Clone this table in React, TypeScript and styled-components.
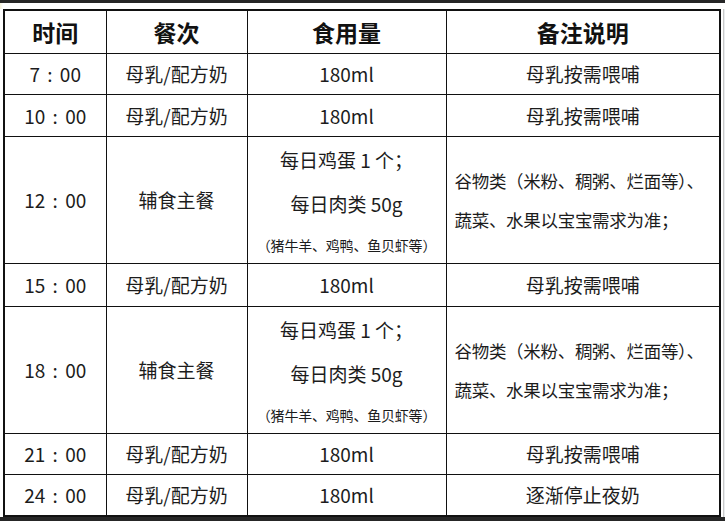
import styled, { createGlobalStyle } from "styled-components";

const GlobalStyle = createGlobalStyle`
  html, body {
    margin: 0;
    padding: 0;
    background: #ffffff;
  }
  body {
    font-family: "Noto Sans CJK SC", "Noto Sans", sans-serif;
    color: #1c1c1c;
  }
`;

const Page = styled.div`
  width: 725px;
  height: 521px;
  display: flex;
  flex-direction: column;
  overflow: hidden;
  background: #ffffff;
`;

const DarkBar = styled.div<{ $h: number }>`
  height: ${(p) => p.$h}px;
  flex-shrink: 0;
  background: #262626;
`;

const Middle = styled.div`
  flex: 1;
  display: flex;
  padding-top: 6px;
  background: linear-gradient(to right, #f6f3dc 0, #ffffff 3px);
`;

const TableWrap = styled.div`
  padding-left: 3px;
  width: 717px;
  background: #ffffff;
`;

const SideStrip = styled.div`
  flex: 1;
  margin-left: 3px;
  background: #e9ecee;
  border-left: 1px solid #c9c9c9;
`;

const Table = styled.table`
  border-collapse: collapse;
  table-layout: fixed;
  width: 716px;
  border: 2px solid #111;
`;

const Col = styled.col<{ $w: number }>`
  width: ${(p) => p.$w}px;
`;

const Row = styled.tr<{ $h: number }>`
  height: ${(p) => p.$h}px;
`;

const Th = styled.th`
  border: 1.5px solid #111;
  font-size: 23px;
  font-weight: 700;
  color: #111;
  text-align: center;
  vertical-align: middle;
  padding: 0;
`;

const Td = styled.td<{ $align?: string }>`
  border: 1.5px solid #111;
  font-size: 19px;
  text-align: ${(p) => p.$align || "center"};
  vertical-align: middle;
  padding: 0;
  white-space: nowrap;
`;

const TimeTd = styled(Td)`
  word-spacing: 3px;
`;

const Food = styled.div`
  display: flex;
  flex-direction: column;
  align-items: center;
  padding-top: 2px;
`;

const FoodLine = styled.div<{ $h: number }>`
  height: ${(p) => p.$h}px;
  line-height: ${(p) => p.$h}px;
`;

const SmallLine = styled.div`
  height: 36px;
  line-height: 36px;
  font-size: 14px;
  letter-spacing: -0.2px;
`;

const Note = styled.div`
  padding-left: 8px;
  font-size: 17.5px;
  line-height: 39px;
  letter-spacing: -0.3px;
`;

type Simple = { time: string; meal: string; amount: string; note: string };
type Row = Simple | { time: string; big: true };

const rows: Row[] = [
  { time: "7 : 00", meal: "母乳/配方奶", amount: "180ml", note: "母乳按需喂哺" },
  { time: "10 : 00", meal: "母乳/配方奶", amount: "180ml", note: "母乳按需喂哺" },
  { time: "12 : 00", big: true },
  { time: "15 : 00", meal: "母乳/配方奶", amount: "180ml", note: "母乳按需喂哺" },
  { time: "18 : 00", big: true },
  { time: "21 : 00", meal: "母乳/配方奶", amount: "180ml", note: "母乳按需喂哺" },
  { time: "24 : 00", meal: "母乳/配方奶", amount: "180ml", note: "逐渐停止夜奶" },
];

const heights = [41, 42, 125, 43, 125, 41, 42];

export default function App() {
  return (
    <Page>
      <GlobalStyle />
      <DarkBar $h={3} />
      <Middle>
        <TableWrap>
          <Table>
            <colgroup>
              <Col $w={102} />
              <Col $w={141} />
              <Col $w={199} />
              <Col $w={274} />
            </colgroup>
            <tbody>
              <Row $h={43}>
                <Th>时间</Th>
                <Th>餐次</Th>
                <Th>食用量</Th>
                <Th>备注说明</Th>
              </Row>
              {rows.map((r, i) =>
                "big" in r ? (
                  <Row key={i} $h={heights[i]}>
                    <TimeTd>{r.time}</TimeTd>
                    <Td>辅食主餐</Td>
                    <Td>
                      <Food>
                        <FoodLine $h={42}>每日鸡蛋 1 个；</FoodLine>
                        <FoodLine $h={46}>每日肉类 50g</FoodLine>
                        <SmallLine>（猪牛羊、鸡鸭、鱼贝虾等）</SmallLine>
                      </Food>
                    </Td>
                    <Td $align="left">
                      <Note>
                        谷物类（米粉、稠粥、烂面等）、
                        <br />
                        蔬菜、水果以宝宝需求为准；
                      </Note>
                    </Td>
                  </Row>
                ) : (
                  <Row key={i} $h={heights[i]}>
                    <TimeTd>{r.time}</TimeTd>
                    <Td>{r.meal}</Td>
                    <Td>{r.amount}</Td>
                    <Td>{r.note}</Td>
                  </Row>
                )
              )}
            </tbody>
          </Table>
        </TableWrap>
        <SideStrip />
      </Middle>
      <DarkBar $h={5} />
    </Page>
  );
}
